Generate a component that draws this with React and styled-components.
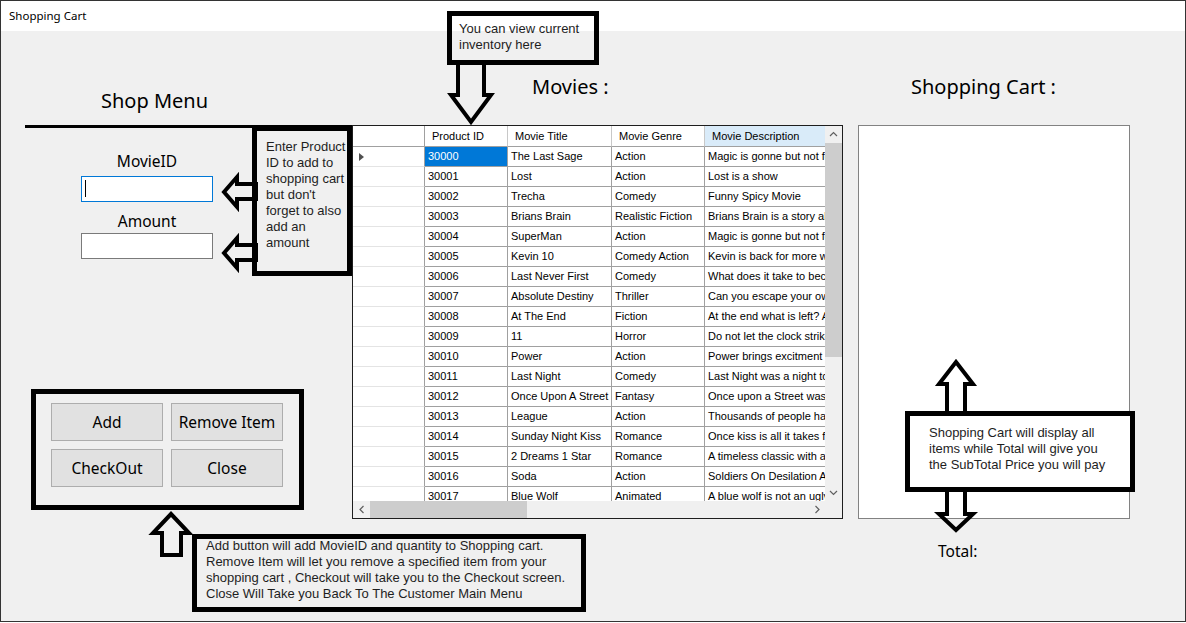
import React from "react";
import styled, { createGlobalStyle } from "styled-components";

const movies = [
  ["30000", "The Last Sage", "Action", "Magic is gonne but not for long"],
  ["30001", "Lost", "Action", "Lost is a show"],
  ["30002", "Trecha", "Comedy", "Funny Spicy Movie"],
  ["30003", "Brians Brain", "Realistic Fiction", "Brians Brain is a story about a boy"],
  ["30004", "SuperMan", "Action", "Magic is gonne but not for long"],
  ["30005", "Kevin 10", "Comedy Action", "Kevin is back for more wacky fun"],
  ["30006", "Last Never First", "Comedy", "What does it take to become first"],
  ["30007", "Absolute Destiny", "Thriller", "Can you escape your own destiny"],
  ["30008", "At The End", "Fiction", "At the end what is left? A hero"],
  ["30009", "11", "Horror", "Do not let the clock strike 11"],
  ["30010", "Power", "Action", "Power brings excitment , and more"],
  ["30011", "Last Night", "Comedy", "Last Night was a night to remember"],
  ["30012", "Once Upon A Street", "Fantasy", "Once upon a Street was a tale"],
  ["30013", "League", "Action", "Thousands of people have joined"],
  ["30014", "Sunday Night Kiss", "Romance", "Once kiss is all it takes for love"],
  ["30015", "2 Dreams 1 Star", "Romance", "A timeless classic with a new twist"],
  ["30016", "Soda", "Action", "Soldiers On Desilation Art war"],
  ["30017", "Blue Wolf", "Animated", "A blue wolf is not an ugly wolf"],
];

const columns = [
  { title: "Product ID", width: 83 },
  { title: "Movie Title", width: 104 },
  { title: "Movie Genre", width: 93 },
  { title: "Movie Description", width: 240, sorted: true },
];

export default function App() {
  return (
    <>
      <GlobalStyle />
      <Page>
        <Window>
          <TitleBar>Shopping Cart</TitleBar>
          <Client>
            <ShopColumn>
              <ShopHeading>Shop Menu</ShopHeading>
              <Rule />
              <Fields>
                <FieldLabel $gap={23}>MovieID</FieldLabel>
                <TextBox $focused $gap={5}>
                  <Caret />
                </TextBox>
                <FieldLabel $gap={9}>Amount</FieldLabel>
                <TextBox $gap={2} />
              </Fields>
              <ButtonGroup>
                <WinButton>Add</WinButton>
                <WinButton>Remove Item</WinButton>
                <WinButton>CheckOut</WinButton>
                <WinButton>Close</WinButton>
              </ButtonGroup>
            </ShopColumn>

            <MoviesColumn>
              <Heading $indent={180}>Movies :</Heading>
              <MovieGrid />
            </MoviesColumn>

            <CartColumn>
              <Heading $indent={53}>Shopping Cart :</Heading>
              <CartList />
              <TotalLabel>Total:</TotalLabel>
            </CartColumn>
          </Client>
        </Window>

        <Callout $x={447} $y={11} $w={152} $h={54} $padX={7}>
          <CalloutText $top={5}>You can view current<br />inventory here</CalloutText>
        </Callout>
        <Callout $x={252} $y={126} $w={100} $h={150} $padX={9}>
          <CalloutText $top={8}>
            Enter Product<br />ID to add to<br />shopping cart<br />but don't<br />forget to also<br />add an<br />amount
          </CalloutText>
        </Callout>
        <Callout $x={192} $y={534} $w={394} $h={78} $padX={9}>
          <CalloutText $top={-1}>
            Add button will add MovieID and quantity to Shopping cart.<br />
            Remove Item will let you remove a specified item from your<br />
            shopping cart , Checkout will take you to the Checkout screen.<br />
            Close Will Take you Back To The Customer Main Menu
          </CalloutText>
        </Callout>
        <Callout $x={905} $y={411} $w={230} $h={81} $padX={19} $fill="#fff">
          <CalloutText $top={9}>
            Shopping Cart will display all<br />items while Total will give you<br />the SubTotal Price you will pay
          </CalloutText>
        </Callout>

        <Arrow x={444} y={60} w={54} h={68} points="14,2 40,2 40,35 47,35 27,62 7,35 14,35" />
        <Arrow x={218} y={172} w={42} h={42} points="6,20 19,5 19,12 38,12 38,27 19,27 19,35" />
        <Arrow x={218} y={233} w={42} h={42} points="6,20 19,5 19,12 38,12 38,27 19,27 19,35" />
        <Arrow x={146} y={506} w={50} h={56} points="25,8 43,27 35,27 35,49 16,49 16,27 7,27" />
        <Arrow x={930} y={352} w={52} h={64} points="26,10 43,32 35,32 35,61 17,61 17,32 9,32" />
        <Arrow x={930} y={486} w={52} h={52} points="17,4 35,4 35,28 43,28 26,44 9,28 17,28" />
      </Page>
    </>
  );
}

function MovieGrid() {
  return (
    <GridFrame>
      <DataArea>
        <GridRow $head>
          <RowHeaderCell $head />
          {columns.map((col) => (
            <HeaderCell key={col.title} $w={col.width} $sorted={col.sorted}>
              {col.title}
            </HeaderCell>
          ))}
        </GridRow>
        {movies.map((movie, i) => (
          <GridRow key={movie[0]}>
            <RowHeaderCell>{i === 0 && <CurrentRow />}</RowHeaderCell>
            {movie.map((value, j) => (
              <Cell key={j} $w={columns[j].width} $selected={i === 0 && j === 0}>
                {value}
              </Cell>
            ))}
          </GridRow>
        ))}
      </DataArea>
      <VScroll>
        <ScrollButton>
          <Chevron dir="up" />
        </ScrollButton>
        <VTrack>
          <VThumb />
        </VTrack>
        <ScrollButton>
          <Chevron dir="down" />
        </ScrollButton>
      </VScroll>
      <HScroll>
        <ScrollButton>
          <Chevron dir="left" />
        </ScrollButton>
        <HTrack>
          <HThumb />
        </HTrack>
        <ScrollButton>
          <Chevron dir="right" />
        </ScrollButton>
      </HScroll>
      <ScrollCorner />
    </GridFrame>
  );
}

function Chevron({ dir }) {
  const pts = {
    up: "1,5 4.5,1.5 8,5",
    down: "1,2 4.5,5.5 8,2",
    left: "5.5,1 2,4.5 5.5,8",
    right: "2.5,1 6,4.5 2.5,8",
  }[dir];
  const vertical = dir === "up" || dir === "down";
  return (
    <svg width={vertical ? 9 : 8} height={vertical ? 7 : 9}>
      <polyline points={pts} fill="none" stroke="#606060" strokeWidth="1.2" />
    </svg>
  );
}

function Arrow({ x, y, w, h, points }) {
  return (
    <ArrowSvg $x={x} $y={y} width={w} height={h} viewBox={`0 0 ${w} ${h}`}>
      <polygon points={points} fill="none" stroke="#000" strokeWidth="4" strokeLinejoin="miter" />
    </ArrowSvg>
  );
}

const GlobalStyle = createGlobalStyle`
  html, body {
    margin: 0;
    padding: 0;
    background: #ffffff;
  }
  body {
    font-family: "Noto Sans", "Segoe UI", sans-serif;
    color: #000;
  }
`;

const Page = styled.div`
  position: relative;
  width: 1186px;
  height: 623px;
  overflow: hidden;
`;

const Window = styled.div`
  width: 1186px;
  height: 622px;
  box-sizing: border-box;
  border: 1px solid #333333;
  background: #f0f0f0;
  display: flex;
  flex-direction: column;
`;

const TitleBar = styled.div`
  height: 30px;
  flex: 0 0 30px;
  background: #ffffff;
  padding-left: 8px;
  font-size: 11.5px;
  line-height: 30px;
  color: #000;
`;

const Client = styled.div`
  flex: 1;
  display: flex;
  align-items: flex-start;
`;

const ShopColumn = styled.div`
  width: 351px;
  flex: 0 0 351px;
  display: flex;
  flex-direction: column;
`;

const ShopHeading = styled.div`
  margin-top: 58px;
  padding-left: 100px;
  font-size: 20px;
  line-height: 24px;
`;

const Rule = styled.div`
  margin: 12px 0 0 24px;
  width: 327px;
  height: 3px;
  background: #000;
`;

const Fields = styled.div`
  margin-left: 80px;
  width: 132px;
  display: flex;
  flex-direction: column;
  align-items: center;
`;

const FieldLabel = styled.div`
  margin-top: ${(p) => p.$gap}px;
  font-size: 15.5px;
  line-height: 20px;
`;

const TextBox = styled.div`
  margin-top: ${(p) => p.$gap}px;
  width: 132px;
  height: 26px;
  box-sizing: border-box;
  background: #fff;
  border: 1px solid ${(p) => (p.$focused ? "#0078d7" : "#7a7a7a")};
  padding: 3px 0 0 3px;
`;

const Caret = styled.div`
  width: 1px;
  height: 17px;
  background: #000;
`;

const ButtonGroup = styled.div`
  margin: 130px 0 0 30px;
  width: 273px;
  height: 121px;
  box-sizing: border-box;
  border: 5px solid #000;
  padding: 9px 0 0 15px;
  display: grid;
  grid-template-columns: 112px 112px;
  grid-auto-rows: 38px;
  column-gap: 8px;
  row-gap: 8px;
  align-content: start;
`;

const WinButton = styled.button`
  box-sizing: border-box;
  margin: 0;
  background: #e1e1e1;
  border: 1px solid #adadad;
  font-family: "Noto Sans", "Segoe UI", sans-serif;
  font-size: 15.5px;
  color: #000;
  padding: 0;
`;

const MoviesColumn = styled.div`
  width: 491px;
  flex: 0 0 491px;
  display: flex;
  flex-direction: column;
`;

const Heading = styled.div`
  margin-top: 44px;
  padding-left: ${(p) => p.$indent}px;
  font-size: 20px;
  line-height: 24px;
  margin-bottom: 26px;
`;

const GridFrame = styled.div`
  width: 491px;
  height: 394px;
  box-sizing: border-box;
  border: 1px solid #1e1e1e;
  background: #fff;
  display: grid;
  grid-template-columns: 1fr 17px;
  grid-template-rows: 1fr 17px;
  font-family: "Liberation Sans", Arial, sans-serif;
  font-size: 11px;
`;

const DataArea = styled.div`
  overflow: hidden;
  display: flex;
  flex-direction: column;
  min-width: 0;
  min-height: 0;
`;

const GridRow = styled.div`
  display: flex;
  flex: 0 0 ${(p) => (p.$head ? 21 : 20)}px;
  height: ${(p) => (p.$head ? 21 : 20)}px;
`;

const RowHeaderCell = styled.div`
  flex: 0 0 72px;
  box-sizing: border-box;
  border-right: 1px solid #a0a0a0;
  border-bottom: 1px solid ${(p) => (p.$head ? "#a0a0a0" : "#e4e4e4")};
  background: #fff;
  display: flex;
  align-items: center;
  padding-left: 6px;
`;

const CurrentRow = styled.span`
  width: 0;
  height: 0;
  border-left: 5px solid #505050;
  border-top: 4px solid transparent;
  border-bottom: 4px solid transparent;
`;

const HeaderCell = styled.div`
  flex: 0 0 ${(p) => p.$w}px;
  box-sizing: border-box;
  border-right: 1px solid #c8c8c8;
  border-bottom: 1px solid #a0a0a0;
  background: ${(p) => (p.$sorted ? "#d9ebf9" : "#fff")};
  padding-left: 7px;
  line-height: 20px;
  white-space: nowrap;
  overflow: hidden;
  color: #000;
`;

const Cell = styled.div`
  flex: 0 0 ${(p) => p.$w}px;
  box-sizing: border-box;
  border-right: 1px solid #a0a0a0;
  border-bottom: 1px solid #a0a0a0;
  background: ${(p) => (p.$selected ? "#0078d7" : "#fff")};
  color: ${(p) => (p.$selected ? "#fff" : "#000")};
  padding-left: 3px;
  line-height: 19px;
  white-space: nowrap;
  overflow: hidden;
`;

const VScroll = styled.div`
  background: #f0f0f0;
  display: flex;
  flex-direction: column;
`;

const HScroll = styled.div`
  background: #f0f0f0;
  display: flex;
`;

const ScrollCorner = styled.div`
  background: #f0f0f0;
`;

const ScrollButton = styled.div`
  flex: 0 0 17px;
  height: 17px;
  width: 17px;
  display: flex;
  align-items: center;
  justify-content: center;
`;

const VTrack = styled.div`
  flex: 1;
`;

const VThumb = styled.div`
  height: 214px;
  background: #cdcdcd;
`;

const HTrack = styled.div`
  flex: 1;
  display: flex;
`;

const HThumb = styled.div`
  width: 157px;
  background: #cdcdcd;
`;

const CartColumn = styled.div`
  width: 272px;
  flex: 0 0 272px;
  margin-left: 15px;
  display: flex;
  flex-direction: column;
`;

const CartList = styled.div`
  height: 394px;
  box-sizing: border-box;
  background: #fff;
  border: 1px solid #828282;
`;

const TotalLabel = styled.div`
  margin-top: 22px;
  padding-left: 80px;
  font-size: 15.5px;
  line-height: 20px;
`;

const Callout = styled.div`
  position: absolute;
  left: ${(p) => p.$x}px;
  top: ${(p) => p.$y}px;
  width: ${(p) => p.$w}px;
  height: ${(p) => p.$h}px;
  box-sizing: border-box;
  border: 5px solid #000;
  background: ${(p) => p.$fill || "transparent"};
  padding-left: ${(p) => p.$padX}px;
  font-family: "Liberation Sans", Arial, sans-serif;
  font-size: 13px;
  line-height: 16px;
  color: #1e1e1e;
  white-space: nowrap;
`;

const CalloutText = styled.p`
  margin: ${(p) => p.$top}px 0 0;
`;

const ArrowSvg = styled.svg`
  position: absolute;
  left: ${(p) => p.$x}px;
  top: ${(p) => p.$y}px;
  overflow: visible;
`;
